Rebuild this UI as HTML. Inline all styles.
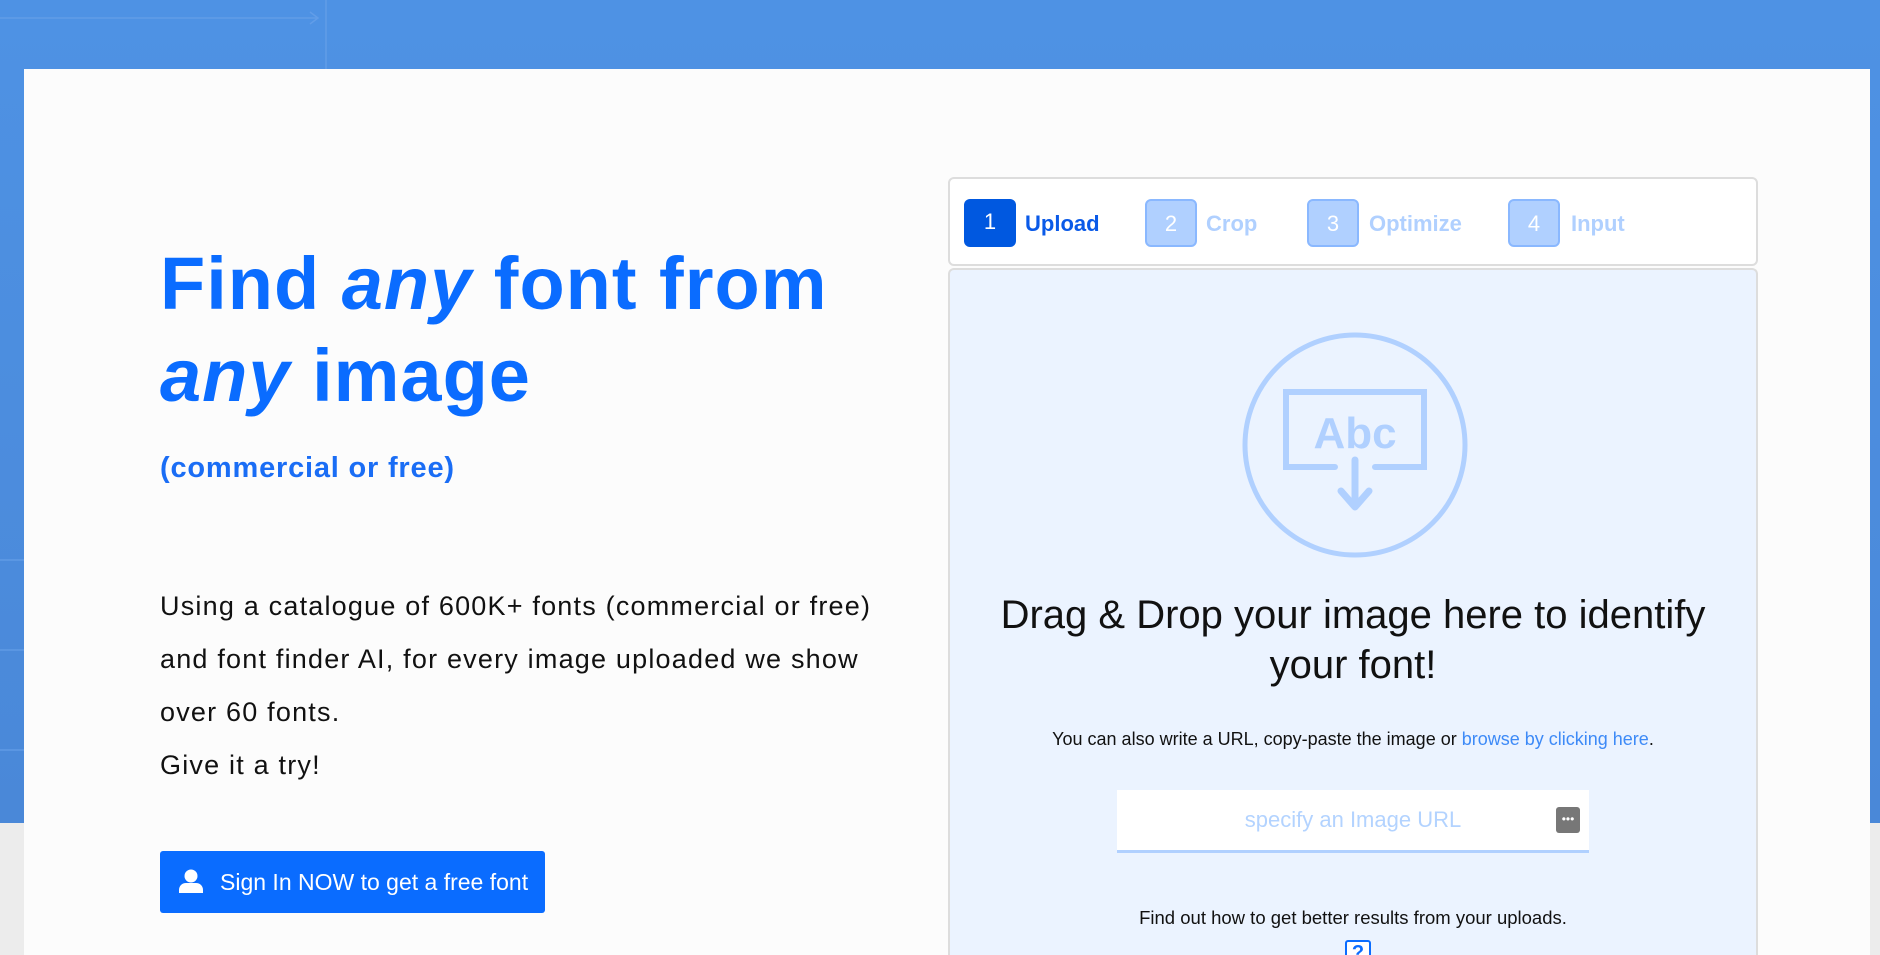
<!DOCTYPE html>
<html style="width:1880px;height:955px;overflow:hidden"><head><meta charset="utf-8"><style>
*{margin:0;padding:0;box-sizing:border-box}
body{width:1880px;height:955px;overflow:hidden;background:#ececec;font-family:"Liberation Sans",sans-serif;position:relative}
.bg{position:absolute;left:0;top:0;width:1880px;height:823px;background:linear-gradient(180deg,#4e92e4,#4a88d8)}
.card{position:absolute;left:24px;top:69px;width:1846px;height:886px;background:#fcfcfc}
.h1{position:absolute;left:160px;top:238px;font-size:74px;font-weight:bold;color:#0a6cff;line-height:92px;letter-spacing:1px}
.sub{position:absolute;left:160px;top:452px;font-size:29px;font-weight:bold;color:#1a6df5;letter-spacing:0.8px}
.p{position:absolute;left:160px;top:580px;font-size:27px;line-height:53px;color:#111;letter-spacing:1.2px}
.btn{position:absolute;left:160px;top:851px;width:385px;height:62px;background:#0a6cff;border-radius:3px;color:#fff;font-size:23px;line-height:62px;padding-left:60px}
.steps{position:absolute;left:948px;top:177px;width:810px;height:89px;border:2px solid #ddd;border-radius:6px;background:#fff}
.st{position:absolute;top:20px;width:52px;height:48px;border-radius:6px;color:#fff;font-size:22px;text-align:center;line-height:46px}
.lb{position:absolute;top:32px;font-size:22px;font-weight:bold}
.drop{position:absolute;left:948px;top:268px;width:810px;height:687px;border:2px solid #ddd;border-bottom:none;border-radius:6px 6px 0 0;background:#ebf3ff;overflow:hidden}
.c{position:absolute;width:100%;text-align:center;left:0}
</style></head><body>
<div class="bg"></div>
<svg style="position:absolute;left:0;top:0" width="1880" height="823"><g stroke="#6aa3ea" stroke-width="1.5" fill="none" opacity=".7"><path d="M0 18H318M310 12l8 6-8 6M326 0V69M0 560H24M0 650H24M0 750H24"/></g></svg>
<div class="card"></div>
<div class="h1">Find <i>any</i> font from<br><i>any</i> image</div>
<div class="sub">(commercial or free)</div>
<div class="p">Using a catalogue of 600K+ fonts (commercial or free)<br>and font finder AI, for every image uploaded we show<br>over 60 fonts.<br>Give it a try!</div>
<div class="btn"><svg style="position:absolute;left:18px;top:18px" width="26" height="24" viewBox="0 0 26 24"><circle cx="13" cy="7" r="6.5" fill="#fff"/><path d="M1 24v-3c0-4 3-7 7-7h10c4 0 7 3 7 7v3z" fill="#fff"/></svg>Sign In NOW to get a free font</div>
<div class="steps">
<div class="st" style="left:14px;background:#0058e0">1</div><div class="lb" style="left:75px;color:#0a5ae8">Upload</div>
<div class="st" style="left:195px;background:#b0d0ff;border:2px solid #8ab8ff">2</div><div class="lb" style="left:256px;color:#b0d0ff">Crop</div>
<div class="st" style="left:357px;background:#b0d0ff;border:2px solid #8ab8ff">3</div><div class="lb" style="left:419px;color:#b0d0ff">Optimize</div>
<div class="st" style="left:558px;background:#b0d0ff;border:2px solid #8ab8ff">4</div><div class="lb" style="left:621px;color:#b0d0ff">Input</div>
</div>
<div class="drop">
<svg style="position:absolute;left:290px;top:60px" width="230" height="230" viewBox="0 0 230 230"><circle cx="115" cy="115" r="110" fill="none" stroke="#b0d0ff" stroke-width="5"/><path d="M95 137H46V62H184V137H135" fill="none" stroke="#b0d0ff" stroke-width="6" stroke-linecap="round"/><path d="M115 130V175M101 161l14 16 14-16" fill="none" stroke="#b0d0ff" stroke-width="7" stroke-linecap="round" stroke-linejoin="round"/><text x="115" y="118" text-anchor="middle" font-family="Liberation Sans" font-weight="bold" font-size="44" fill="#b0d0ff">Abc</text></svg>
<div class="c" style="top:320px;font-size:40px;line-height:50px;color:#111">Drag &amp; Drop your image here to identify<br>your font!</div>
<div class="c" style="top:459px;font-size:18px;color:#111">You can also write a URL, copy-paste the image or <span style="color:#3d8af7">browse by clicking here</span>.</div>
<div style="position:absolute;left:167px;top:520px;width:472px;height:63px;background:#fff;border-bottom:3px solid #b0d0ff;text-align:center;line-height:60px;font-size:22px;color:#b3d3ff">specify an Image URL<div style="position:absolute;right:9px;top:17px;width:24px;height:26px;background:#777;border-radius:3px;color:#fff;font-size:12px;line-height:24px">•••</div></div>
<div class="c" style="top:637px;font-size:18.5px;color:#111">Find out how to get better results from your uploads.</div>
<div style="position:absolute;left:395px;top:670px;width:26px;height:30px;border:2px solid #0a6cff;border-radius:3px;background:#fff;color:#0a6cff;font-weight:bold;text-align:center;font-size:20px">?</div>
</div>
</body></html>
